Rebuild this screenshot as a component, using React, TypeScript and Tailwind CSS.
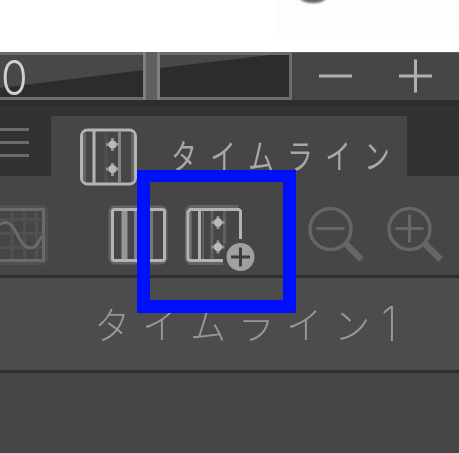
import React from "react";

const jp = "font-['Noto_Sans_CJK_JP','Noto_Sans',sans-serif]";

function TitleChars({ text, cell, glyph }: { text: string; cell: string; glyph: string }) {
  return (
    <>
      {Array.from(text).map((c, i) => (
        <span key={i} className={`flex shrink-0 justify-center ${cell}`}>
          <span className={`inline-block ${glyph}`}>{c}</span>
        </span>
      ))}
    </>
  );
}

function TimelineIcon() {
  return (
    <svg className="block h-[60px] w-[60px]" viewBox="78 127 60 60" fill="none">
      <rect x="81.5" y="130" width="54" height="54" rx="6" stroke="#b4b4b4" strokeWidth="3" />
      <path d="M84.5 133V181M132.5 133V181" stroke="#656565" strokeWidth="3" />
      <path d="M94 130V183" stroke="#b4b4b4" strokeWidth="3" />
      <path d="M106 132V182" stroke="#505050" strokeWidth="3" />
      <path d="M119.5 131V183" stroke="#858585" strokeWidth="3" />
      <path d="M106 144.5H119M112.5 138V151M106 169H119M112.5 163V176" stroke="#929292" strokeWidth="3" />
      <circle cx="112.5" cy="144.5" r="4" fill="#b8b8b8" />
      <circle cx="112.5" cy="169" r="4" fill="#b8b8b8" />
    </svg>
  );
}

function GraphIcon() {
  return (
    <svg className="block h-[62px] w-[49px]" viewBox="0 204 49 62" fill="none">
      <path d="M0 206.5H44L46.5 210V260L43 263.5H0" stroke="#505050" strokeWidth="3" />
      <path d="M0 219.5H42M0 233.5H42M0 247.5H42M12 211V259M24.5 211V259M36.5 211V259" stroke="#505050" strokeWidth="3" />
      <path d="M0 209.5H43.5V260.5H0" stroke="#6a6a6a" strokeWidth="3" />
      <path d="M0 225C2 222 8 221 12 226C19 235 21 247 30 248C36 248 38 243 42 236" stroke="#6a6a6a" strokeWidth="3" />
    </svg>
  );
}

function FrameIcon() {
  return (
    <svg className="block h-[62px] w-[62px]" viewBox="107 204 62 62" fill="none">
      <rect x="110" y="207" width="56" height="56" rx="5" stroke="#646464" strokeWidth="3" />
      <path d="M124.5 211V259" stroke="#959595" strokeWidth="6" />
      <path d="M135.5 211V259" stroke="#808080" strokeWidth="3" />
      <path d="M151.5 211V259" stroke="#777777" strokeWidth="3" />
      <rect x="112.5" y="209.5" width="52" height="51" rx="2" stroke="#b4b4b4" strokeWidth="3" />
    </svg>
  );
}

function NewTimelineIcon() {
  return (
    <svg className="block h-[70px] w-[74px]" viewBox="184 204 74 70" fill="none">
      <path d="M238 206.5H190L186.5 210V260L190 263.5H223" stroke="#646464" strokeWidth="3" />
      <path d="M240.5 239V211L239 209.5H190L188 212V259L190 260.5H223" stroke="#b4b4b4" strokeWidth="3" />
      <path d="M190.5 212V259" stroke="#777777" strokeWidth="2" />
      <path d="M199.5 211V259" stroke="#b2b2b2" strokeWidth="3" />
      <path d="M203 211V259" stroke="#606060" strokeWidth="2" />
      <path d="M212 211V259" stroke="#606060" strokeWidth="3" />
      <path d="M224.5 211V244" stroke="#606060" strokeWidth="3" />
      <path d="M211.5 222.5H224.5M218 216V229M211.5 247H224.5M218 240.5V253.5" stroke="#909090" strokeWidth="3" />
      <circle cx="218" cy="222.5" r="4.2" fill="#bababa" />
      <circle cx="218" cy="247" r="4.2" fill="#bababa" />
      <circle cx="240.5" cy="257" r="14" fill="#a0a0a0" />
      <path d="M231 257H250M240.5 247.5V266.5" stroke="#3c3c3c" strokeWidth="3" />
    </svg>
  );
}

function ZoomIcon({ plus = false }: { plus?: boolean }) {
  return (
    <svg className="block h-[60px] w-[60px]" viewBox="0 0 60 60" fill="none" stroke="#666666">
      <circle cx="23.5" cy="24" r="20.5" strokeWidth="3.5" />
      <path d="M9.5 23.5H37.5" strokeWidth="3" />
      {plus && <path d="M23.5 9.5V37.5" strokeWidth="3" />}
      <path d="M38 38L54.5 54.5" strokeWidth="6.5" />
    </svg>
  );
}

export default function App() {
  return (
    <div className="relative flex h-[453px] w-[459px] flex-col overflow-hidden bg-[#464646]">
      <div className="flex h-[52px] shrink-0 justify-end bg-white">
        <div className="h-[38px] w-[182px] overflow-hidden bg-[#fcfefc] pl-[23px]">
          <div className="-mt-[8px] h-[11px] w-[26px] rounded-[50%] bg-[#676367] blur-[1px]" />
        </div>
      </div>

      <div className="flex h-12 shrink-0 bg-[#464646]">
        <div className="relative h-12 w-[292px] border-y-[3px] border-r-[3px] border-[#6c6c6c] bg-[#2c2c2c]">
          <svg className="block h-[42px] w-[289px]" viewBox="0 0 289 42" preserveAspectRatio="none">
            <path d="M0 0H270L160 13L0 33Z" fill="#484848" />
          </svg>
          <div className="absolute top-[-3px] left-[143px] h-12 w-[17px] border-x-[3px] border-[#808080] bg-[#606060]" />
          <span className="absolute top-[-1px] left-[1px] origin-left scale-x-[0.9] font-['Inter','Roboto',sans-serif] text-[48px] leading-[48px] font-light text-[#d0d0d0]">0</span>
        </div>
        <div className="flex flex-1 border-t border-[#5c5c5c]">
          <svg className="block h-[47px] w-[167px]" viewBox="292 53 167 47" fill="none" stroke="#b0b0b0" strokeWidth="3">
            <path d="M319 76H352M399 76H432M415.5 59.5V92.5" />
          </svg>
        </div>
      </div>

      <div className="flex h-[76px] shrink-0 border-t-[6px] border-[#2d2d2d] bg-[#323232]">
        <div className="h-[70px] w-[51px] shrink-0 pt-[22px]">
          <div className="flex w-[29px] flex-col gap-[10px]">
            <div className="h-[3px] bg-[#6b6b6b]" />
            <div className="h-[3px] bg-[#6b6b6b]" />
            <div className="h-[3px] bg-[#6b6b6b]" />
          </div>
        </div>
        <div className={`mt-[10px] flex h-[60px] w-[356px] shrink-0 bg-[#464646] pl-[27px] ${jp}`}>
          <div className="relative z-10 mt-[11px] shrink-0"><TimelineIcon /></div>
          <div className="ml-[27px] flex h-[60px] pt-[15px] text-[34px] leading-[48px] font-normal text-[#a8a8a8]">
            <TitleChars text="タイムライン" cell="w-[38.5px]" glyph="scale-x-[0.75]" />
          </div>
        </div>
      </div>

      <div className="flex h-[99px] shrink-0 bg-[#464646] pt-[28px]">
        <GraphIcon />
        <div className="ml-[58px]"><FrameIcon /></div>
        <div className="ml-[15px]"><NewTimelineIcon /></div>
        <div className="mt-[1px] ml-[49px]"><ZoomIcon /></div>
        <div className="mt-[1px] ml-[19px] shrink-0"><ZoomIcon plus /></div>
      </div>

      <div className={`flex h-[98px] shrink-0 border-y-[3px] border-[#2e2e2e] bg-[#4c4c4c] pt-[21px] pl-[88px] text-[38px] leading-[48px] font-light text-[#989898] ${jp}`}>
        <TitleChars text="タイムライン" cell="w-[48px]" glyph="scale-x-[0.94]" />
        <span className="ml-[5px] inline-block origin-left scale-x-[0.9] pt-px font-['Inter','Roboto',sans-serif] text-[48px] font-extralight">1</span>
      </div>
      <div className="flex-1 bg-[#464646]" />

      <div className="absolute top-[170px] left-[137px] z-20 h-[143px] w-[159px] border-[13px] border-t-[12px] border-[#0010fe]" />
    </div>
  );
}
